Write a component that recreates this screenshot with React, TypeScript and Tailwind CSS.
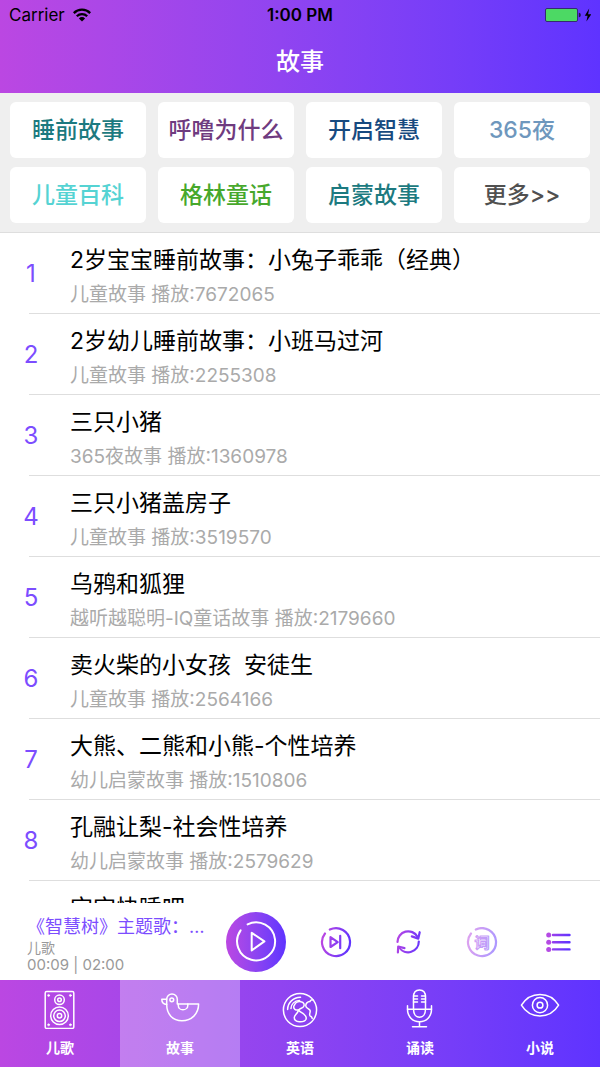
import { useState } from "react"
import type { ReactNode } from "react"

interface Category {
  name: string
  color: string
}

interface Story {
  title: string
  album?: string
  plays?: number
}

interface Tab {
  name: string
  icon: ReactNode
}

const categories: Category[] = [
  { name: "睡前故事", color: "text-[#1c7a80]" },
  { name: "呼噜为什么", color: "text-[#6f3b7f]" },
  { name: "开启智慧", color: "text-[#174a80]" },
  { name: "365夜", color: "text-[#6e97bd]" },
  { name: "儿童百科", color: "text-[#55d3d3]" },
  { name: "格林童话", color: "text-[#47a82c]" },
  { name: "启蒙故事", color: "text-[#1c7a80]" },
  { name: "更多>>", color: "text-[#505050]" },
]

const stories: Story[] = [
  { title: "2岁宝宝睡前故事：小兔子乖乖（经典）", album: "儿童故事", plays: 7672065 },
  { title: "2岁幼儿睡前故事：小班马过河", album: "儿童故事", plays: 2255308 },
  { title: "三只小猪", album: "365夜故事", plays: 1360978 },
  { title: "三只小猪盖房子", album: "儿童故事", plays: 3519570 },
  { title: "乌鸦和狐狸", album: "越听越聪明-IQ童话故事", plays: 2179660 },
  { title: "卖火柴的小女孩  安徒生", album: "儿童故事", plays: 2564166 },
  { title: "大熊、二熊和小熊-个性培养", album: "幼儿启蒙故事", plays: 1510806 },
  { title: "孔融让梨-社会性培养", album: "幼儿启蒙故事", plays: 2579629 },
  { title: "宝宝快睡吧" },
]

// Tab icons, all on a 40x40 grid
const TabIcon = ({ children }: { children: ReactNode }) => (
  <svg
    viewBox="0 0 40 40"
    className="size-10"
    fill="none"
    stroke="currentColor"
    strokeWidth="1.5"
    strokeLinecap="round"
    strokeLinejoin="round"
    aria-hidden="true"
  >
    {children}
  </svg>
)

const tabs: Tab[] = [
  {
    name: "儿歌",
    icon: (
      <TabIcon>
        <rect x="5.2" y="2.6" width="28.6" height="36.8" rx="1.5" />
        <circle cx="19.5" cy="10.8" r="4.8" />
        <circle cx="19.5" cy="10.8" r="1.8" />
        <circle cx="19.5" cy="26.8" r="8.8" />
        <circle cx="19.5" cy="26.8" r="5.8" />
        <circle cx="19.5" cy="26.8" r="2.2" />
        <g fill="currentColor" strokeWidth="0.6">
          <circle cx="8.6" cy="6.4" r="1" />
          <circle cx="30.4" cy="6.4" r="1" />
          <circle cx="8.6" cy="35.8" r="1" />
          <circle cx="30.4" cy="35.8" r="1" />
        </g>
      </TabIcon>
    ),
  },
  {
    name: "故事",
    icon: (
      <TabIcon>
        <path d="M6.7 10.3a5.3 5.3 0 0 1 10.6 0v4.8H38.6C38.6 25 31.5 31.7 22 31.7S6.7 25 6.7 15.5z" />
        <path d="M6.7 10.2H1.8c0 3 1.8 5 4.9 5.2" />
        <circle cx="11.8" cy="10.8" r="1.9" />
        <path d="M18.3 15.1v1.3c0 2.5 2 4.4 4.6 4.4s4.9-1.9 4.9-4.4v-1.3" />
      </TabIcon>
    ),
  },
  {
    name: "英语",
    icon: (
      <TabIcon>
        <circle cx="20" cy="21" r="16.6" />
        <path d="M7.6 20.5C7.8 13.5 13 8.6 20.5 8.3" />
        <path d="M11 19.5c.2-4.5 3.5-7.7 8.5-8" />
        <path d="M18.5 21c-3.2.3-5-1-4.8-3.2.1-1.3 1-1.8 1.3-2.8 1-2 4-3 6-2.3 2.8.6 4 3 2.600 4.900-1.200 1.700-3.400 1.500-5.100 3.400z" />
        <path d="M18.5 21c1.500 2.300 3.500 2.500 5.200 4 2 1.700 3 3.300 2.300 5.200-1 2.200-4 2.700-6.700 2.500-2.800-.2-5.100-1.700-5-4.200.1-2.800 3.300-3.500 4.200-7.500z" />
        <path d="M33.3 11.200c-1.800-.9-3 .2-3.300 1.300-2.500.2-4.500 2-4.200 4.500.2 2.300 2.700 2.500 4 4 1.300 1.800-.8 3.500 0 5.300.7 1.300 2.200 1.200 2.400 3.200" />
      </TabIcon>
    ),
  },
  {
    name: "诵读",
    icon: (
      <TabIcon>
        <path d="M13.5 8C13.5 3.5 16 1 19.5 1s6 2.5 6 7v12c0 5-2.5 8.3-6 8.3s-6-3.3-6-8.3z" />
        <path d="M7.5 16.7V20c0 7.5 5 12.7 12 12.7s12-5.2 12-12.7v-3.3" />
        <path d="M7.5 20.3h24M19.5 32.7v5M12.5 37.7h14" />
        <path d="M13.5 7h4M13.5 10h4M13.5 13h4M25.5 7h-4M25.5 10h-4M25.5 13h-4" />
      </TabIcon>
    ),
  },
  {
    name: "小说",
    icon: (
      <TabIcon>
        <path d="M1.4 16.2C5.5 9.5 12 5.4 20 5.4s14.5 4.1 18.6 10.8C34.5 22.9 28 27 20 27S5.5 22.9 1.4 16.2z" />
        <circle cx="20" cy="16.2" r="7.6" />
        <circle cx="20" cy="16.2" r="2.9" />
      </TabIcon>
    ),
  },
]

const StatusBar = () => (
  <div className="grid h-[30px] grid-cols-3 items-center px-[9px] text-[17px] leading-[30px] text-black">
    <div className="flex items-center gap-2">
      <span>Carrier</span>
      <svg viewBox="0 0 18 14" className="h-[14px] w-[18px]" fill="none" stroke="currentColor" strokeWidth="2.3" aria-hidden="true">
        <path d="M.8 5.1a11.6 11.6 0 0 1 16.4 0M3.8 8.2a7.4 7.4 0 0 1 10.4 0" />
        <path d="M9 13.5 5.9 10.4a4.4 4.4 0 0 1 6.2 0z" fill="currentColor" stroke="none" />
      </svg>
    </div>
    <span className="text-center font-semibold">1:00 PM</span>
    <div className="flex justify-end">
      <svg viewBox="0 0 48 16" className="h-4 w-12" aria-hidden="true">
        <rect x="2.5" y="1.5" width="32" height="13" rx="1.5" fill="#4cd964" stroke="#352a72" />
        <path d="M35.8 5.8c1.6.2 2 1.2 2 2.2s-.4 2-2 2.2z" fill="#1c1748" />
        <path d="M46.2 1.5 41.8 8.8h2.8l-1.2 5.7L48.4 7.2h-3.3z" fill="#000" />
      </svg>
    </div>
  </div>
)

const StoryRow = ({ story, index }: { story: Story; index: number }) => (
  <li className="pl-[29px]">
    <button type="button" className="flex h-[81px] w-full border-b border-[#dedede] text-left">
      <span className="-ml-[18px] w-10 shrink-0 self-center pt-0.5 text-center text-2xl text-[#7c4dff]">{index + 1}</span>
      <span className="ml-[19px] min-w-0 flex-1 pt-[10px]">
        <span className="block truncate text-[23px] leading-[34px] whitespace-pre text-black">{story.title}</span>
        {story.album && (
          <span className="mt-[5px] block truncate text-[19px] leading-[26px] text-[#aaaaaa]">
            {story.album} 播放:{story.plays}
          </span>
        )}
      </span>
    </button>
  </li>
)

const ControlButton = ({ label, children }: { label: string; children: ReactNode }) => (
  <button type="button" aria-label={label} className="size-8 shrink-0">
    <svg
      viewBox="0 0 32 32"
      className="size-8"
      fill="none"
      stroke="url(#control)"
      strokeWidth="2.2"
      strokeLinecap="round"
      strokeLinejoin="round"
      aria-hidden="true"
    >
      {children}
    </svg>
  </button>
)

const Player = () => (
  <section aria-label="播放器" className="flex shrink-0 items-center bg-white pt-2 pb-[7px] pr-[29px] pl-[27px]">
    {/* gradient shared by the control icons */}
    <svg className="absolute size-0" aria-hidden="true">
      <defs>
        <linearGradient id="control" gradientUnits="userSpaceOnUse" x1="2" y1="12" x2="30" y2="18">
          <stop offset="0" stopColor="#bb47e2" />
          <stop offset="1" stopColor="#5f33ff" />
        </linearGradient>
      </defs>
    </svg>
    <div className="w-[180px] shrink-0 pt-1 text-[#999999]">
      <p className="truncate text-lg leading-6 text-[#7c4dff]">《智慧树》主题歌：…</p>
      <p className="text-sm leading-[17px]">儿歌</p>
      <p className="text-[15px] leading-[17px]">00:09 | 02:00</p>
    </div>
    <button
      type="button"
      aria-label="播放"
      className="ml-[19px] size-[60px] shrink-0 rounded-full bg-linear-to-r from-[#bb47e2] to-[#5f33ff] text-white"
    >
      <svg
        viewBox="0 0 60 60"
        className="size-[60px]"
        fill="none"
        stroke="currentColor"
        strokeWidth="2"
        strokeLinecap="round"
        strokeLinejoin="round"
        aria-hidden="true"
      >
        <path d="M21.6 12.4A19 19 0 1 1 14.6 18.4" />
        <path d="M25.7 20.8v17.6l12.7-9z" />
      </svg>
    </button>
    <div className="ml-[34px] flex flex-1 justify-between">
      <ControlButton label="下一首">
        <path d="M9.8 3.6A14 14 0 1 1 5 7.5" />
        <path d="M10.5 11.2v9.8l7.2-4.9zM20.2 9.8v12.4" />
      </ControlButton>
      <ControlButton label="循环播放">
        <path d="M4.5 16a10.7 10.7 0 0 1 20-5.3" />
        <path d="M26.7 6.2 25.3 12.6 18.8 10.4" />
        <path d="M25.8 15.5a10.7 10.7 0 0 1-19.6 6" />
        <path d="M4.9 26.5 5.2 20.5l6.3 1.6" />
      </ControlButton>
      <ControlButton label="歌词">
        <g opacity="0.5">
          <path d="M9.8 3.6A14 14 0 1 1 5 7.5" />
          <text x="16" y="21.5" textAnchor="middle" fontSize="15" fontWeight="700" fill="#efe2fc" strokeWidth="1.2">
            词
          </text>
        </g>
      </ControlButton>
      <ControlButton label="播放列表">
        <path d="M14 9h16.5v.01M14 16.2h16.5v.01M14 23.4h16.5v.01" strokeWidth="2.4" />
        <g fill="#b54ae4" stroke="none">
          <circle cx="9.7" cy="9" r="2.5" />
          <circle cx="9.7" cy="16.2" r="2.5" />
          <circle cx="9.7" cy="23.4" r="2.5" />
        </g>
      </ControlButton>
    </div>
  </section>
)

const App = () => {
  const [active, setActive] = useState("故事")

  return (
    <div className="flex h-screen flex-col overflow-hidden bg-white font-['Inter','Noto_Sans_CJK_SC',sans-serif]">
      <header className="shrink-0 bg-linear-to-r from-[#bb47e2] to-[#5f33ff]">
        <StatusBar />
        <h1 className="text-center text-2xl leading-[63px] font-medium text-white">故事</h1>
      </header>

      <nav aria-label="分类" className="grid shrink-0 grid-cols-4 gap-x-3 gap-y-[9px] border-b border-[#dedede] bg-[#efefef] px-[10px] py-[9px]">
        {categories.map((category) => (
          <button
            key={category.name}
            type="button"
            className={`h-14 rounded-md bg-white text-[23px] font-medium ${category.color}`}
          >
            {category.name}
          </button>
        ))}
      </nav>

      <main className="min-h-0 flex-1 overflow-hidden">
        <ol>
          {stories.map((story, index) => (
            <StoryRow key={story.title} story={story} index={index} />
          ))}
        </ol>
      </main>

      <Player />

      <nav aria-label="主导航" className="grid shrink-0 grid-cols-5 bg-linear-to-r from-[#bb47e2] to-[#5f33ff] text-white">
        {tabs.map((tab) => (
          <button
            key={tab.name}
            type="button"
            onClick={() => setActive(tab.name)}
            className={`flex h-[87px] flex-col items-center gap-[9px] pt-[9px] ${active === tab.name ? "bg-white/30" : ""}`}
          >
            {tab.icon}
            <span className="text-sm leading-5 font-bold">{tab.name}</span>
          </button>
        ))}
      </nav>
    </div>
  )
}

export default App
